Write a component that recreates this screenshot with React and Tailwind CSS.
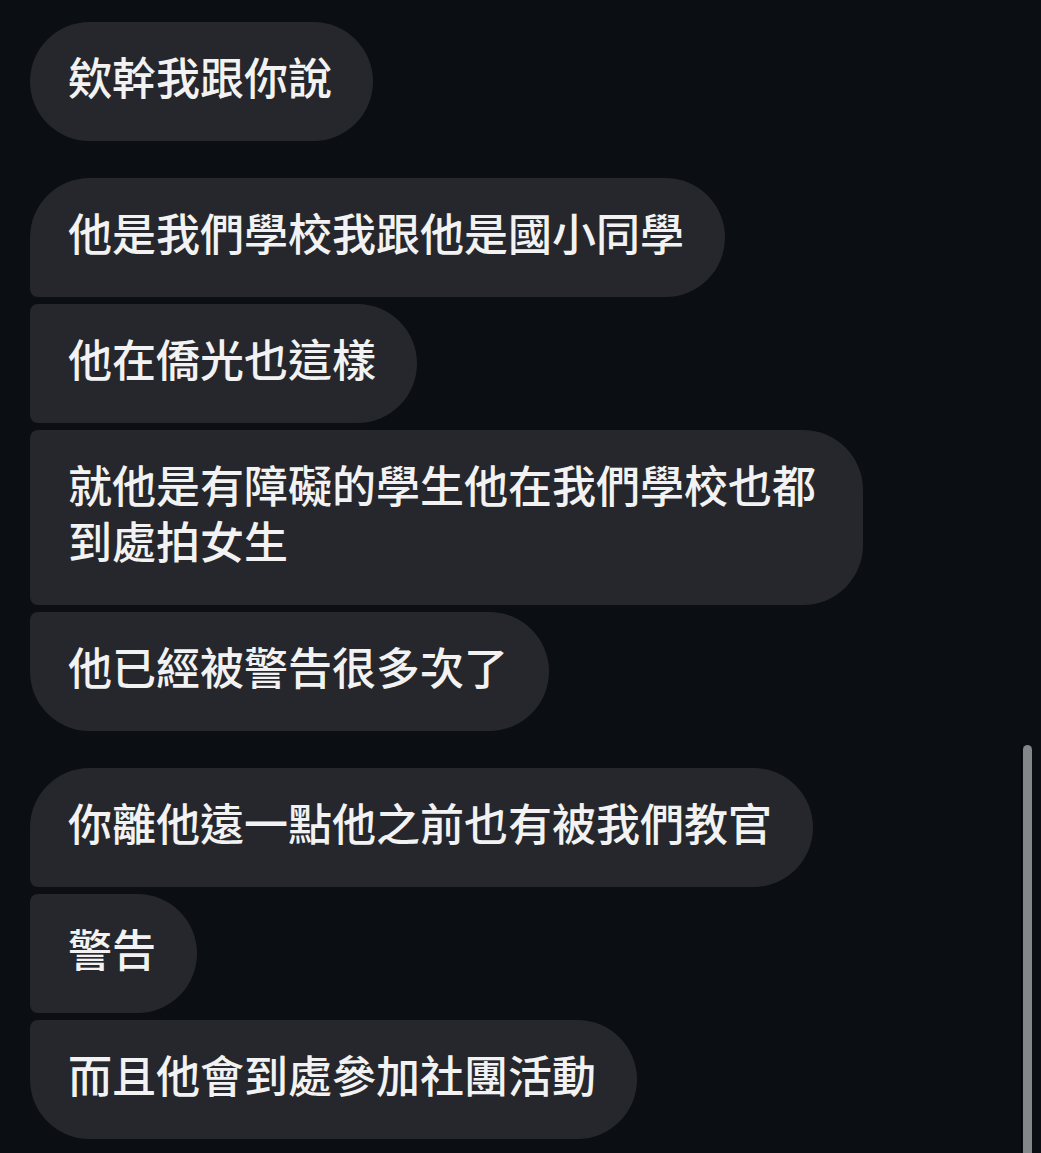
import React from 'react';

const groups = [
    ['欸幹我跟你說'],
    ['他是我們學校我跟他是國小同學', '他在僑光也這樣', '就他是有障礙的學生他在我們學校也都到處拍女生', '他已經被警告很多次了'],
    ['你離他遠一點他之前也有被我們教官', '警告', '而且他會到處參加社團活動'],
];

// corner shape depends on where the bubble sits in its group
function cornerClass(i, n) {
    if (n === 1) return 'rounded-[60px]';
    if (i === 0) return 'rounded-tl-[60px] rounded-tr-[60px] rounded-br-[60px] rounded-bl-[8px]';
    if (i === n - 1) return 'rounded-tl-[8px] rounded-tr-[60px] rounded-br-[60px] rounded-bl-[60px]';
    return 'rounded-tl-[8px] rounded-bl-[8px] rounded-tr-[60px] rounded-br-[60px]';
}

function Bubble({ text, i, n }) {
    return (
        <div className={`max-w-[833px] w-fit bg-[#25272c] text-[#f2f2f2] text-[44px] leading-[56px] font-medium pl-[38px] pr-[41px] pt-[26px] pb-[37px] ${cornerClass(i, n)}`}>
            {text}
        </div>
    );
}

export default function App() {
    return (
        <div className="relative h-[1153px] overflow-hidden bg-[#0b0e13]" style={{ fontFamily: '"Noto Sans CJK TC", "Noto Sans CJK SC", sans-serif' }}>
            <div className="flex flex-col gap-[37px] pl-[30px] pt-[22px]">
                {groups.map((g, gi) => (
                    <div key={gi} className="flex flex-col gap-[7px]">
                        {g.map((t, i) => <Bubble key={i} text={t} i={i} n={g.length} />)}
                    </div>
                ))}
            </div>
            <div className="absolute left-[1021px] top-[744px] w-[1px] h-[409px] bg-[#05070a]" />
            <div className="absolute left-[1023px] top-[745px] w-[9px] h-[420px] rounded-full bg-[#838789]" />
        </div>
    );
}
